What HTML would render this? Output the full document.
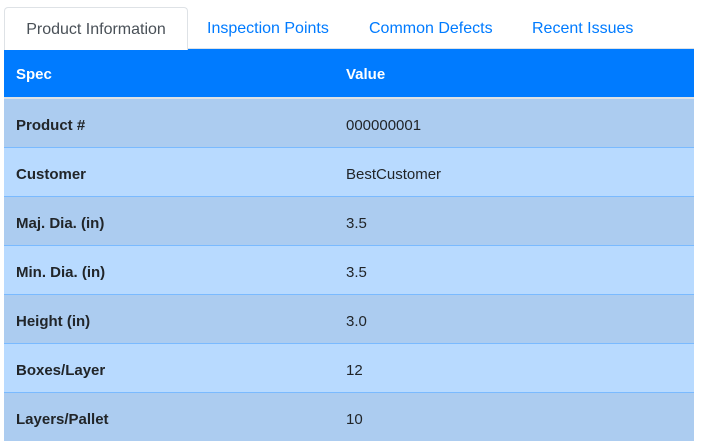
<!DOCTYPE html>
<html><head><style>
body{margin:0;width:702px;height:448px;background:#fff;font-family:"Liberation Sans",sans-serif;font-size:15px;color:#212529;position:relative;overflow:hidden}
.tab{position:absolute;top:8px;height:42px;line-height:42px;font-size:16px;color:#007bff}
.active{top:7px;left:4px;width:182px;border:1px solid #dee2e6;border-bottom:none;border-radius:4px 4px 0 0;background:#fff;color:#495057;text-align:center;z-index:2;height:42px;line-height:44px}
.line{position:absolute;left:4px;width:690px;top:48px;height:1px;background:#dee2e6}
.tbl{position:absolute;left:4px;top:49px;width:690px}
.row{position:relative;height:48px;line-height:48px}
.row span{position:absolute;left:12px;top:3px}
.row span+span{left:342px}
.hd{background:#007bff;color:#fff;font-weight:bold;border-bottom:2px solid #dee2e6}
.hd span{top:2px}
.o{background:#acccf0}
.e{background:#b8daff}
.b{border-top:1px solid #7abaff}
.row span:first-child{font-weight:bold}
</style></head><body>
<div class="tab active">Product Information</div>
<div class="tab" style="left:207px">Inspection Points</div>
<div class="tab" style="left:369px">Common Defects</div>
<div class="tab" style="left:532px">Recent Issues</div>
<div class="line"></div>
<div class="tbl">
<div class="row hd"><span>Spec</span><span>Value</span></div>
<div class="row o"><span>Product #</span><span style="font-weight:normal">000000001</span></div>
<div class="row e b"><span>Customer</span><span style="font-weight:normal">BestCustomer</span></div>
<div class="row o b"><span>Maj. Dia. (in)</span><span style="font-weight:normal">3.5</span></div>
<div class="row e b"><span>Min. Dia. (in)</span><span style="font-weight:normal">3.5</span></div>
<div class="row o b"><span>Height (in)</span><span style="font-weight:normal">3.0</span></div>
<div class="row e b"><span>Boxes/Layer</span><span style="font-weight:normal">12</span></div>
<div class="row o b"><span>Layers/Pallet</span><span style="font-weight:normal">10</span></div>
</div>
</body></html>
